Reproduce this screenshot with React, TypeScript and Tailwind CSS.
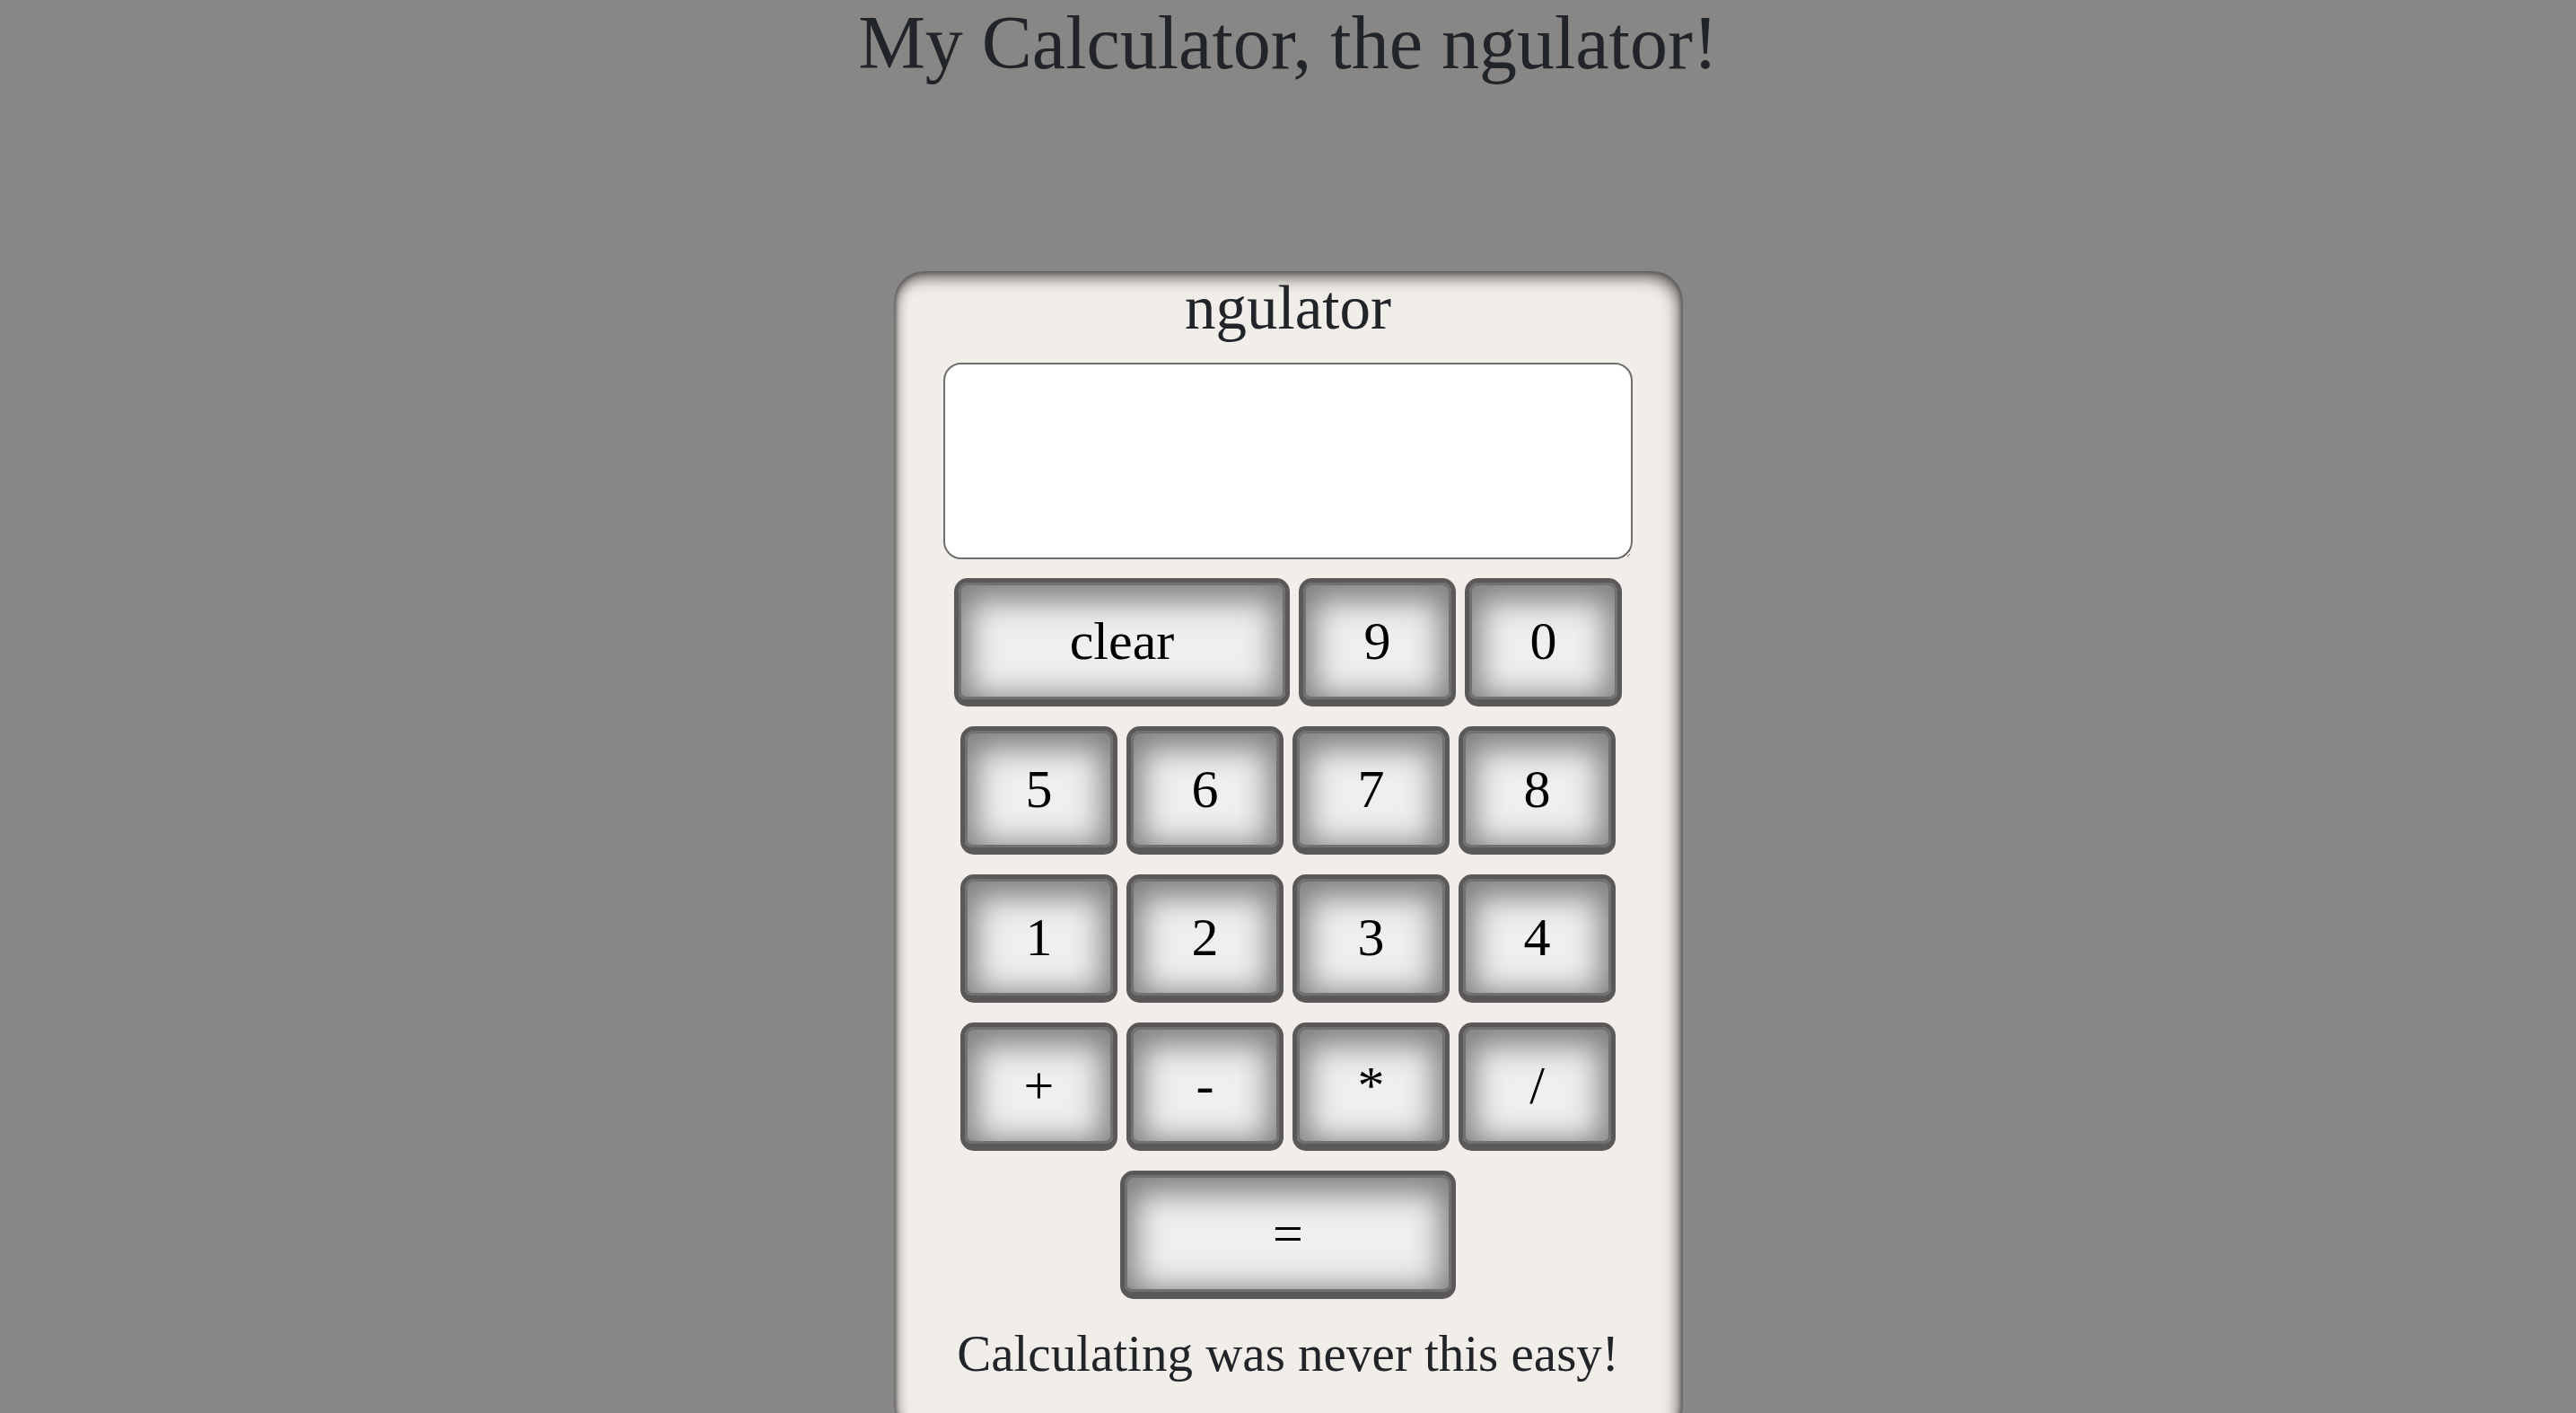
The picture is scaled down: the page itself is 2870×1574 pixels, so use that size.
import { useState } from "react";

const keyBase =
  "flex h-[143px] shrink-0 items-center justify-center rounded-[15px] border-[5px] border-b-[8px] border-[#5a5858] bg-[#efefef] text-[60px] leading-none text-black shadow-[inset_0_0_0_3px_#727070,inset_0_8px_34px_12px_#7f7d7d] cursor-pointer";

const Key = ({
  label,
  wide,
  onClick,
}: {
  label: string;
  wide?: boolean;
  onClick: () => void;
}) => (
  <button
    className={`${keyBase} ${wide ? "w-[374px]" : "w-[175px]"}`}
    onClick={onClick}
  >
    {label}
  </button>
);

export default function App() {
  const [value, setValue] = useState("");

  const press = (k: string) => {
    if (k === "clear") return setValue("");
    if (k === "=") {
      try {
        // eslint-disable-next-line no-new-func
        const res = Function(`"use strict";return (${value})`)();
        setValue(String(res));
      } catch {
        setValue("Error");
      }
      return;
    }
    setValue(value + k);
  };

  const rows = [
    ["5", "6", "7", "8"],
    ["1", "2", "3", "4"],
    ["+", "-", "*", "/"],
  ];

  return (
    <div className="min-h-screen bg-[#888786] font-['Liberation_Serif',serif] text-[#212529]">
      <h1 className="pt-[6px] text-center text-[84px] leading-none font-normal">
        My Calculator, the ngulator!
      </h1>

      <div className="mx-auto mt-[212px] w-[879px] rounded-[34px] bg-[#f1eee9] pt-[7px] pb-[64px] shadow-[inset_0_0_4px_2px_#5e5c5c,inset_-5px_7px_18px_rgba(50,48,48,0.7),inset_4px_0_14px_rgba(60,58,58,0.4)]">
        <h2 className="text-center text-[69px] leading-none font-normal">
          ngulator
        </h2>

        <div className="mt-[26px] flex justify-center">
          <textarea
            value={value}
            onChange={(e) => setValue(e.target.value)}
            className="h-[219px] w-[768px] resize rounded-[20px] border-2 border-[#6f6e6e] bg-white p-3 text-[40px] text-black outline-none"
          />
        </div>

        <div className="mt-[21px] flex flex-col gap-[22px]">
          <div className="flex justify-center gap-[10px]">
            <Key label="clear" wide onClick={() => press("clear")} />
            <Key label="9" onClick={() => press("9")} />
            <Key label="0" onClick={() => press("0")} />
          </div>
          {rows.map((row, i) => (
            <div key={i} className="flex justify-center gap-[10px]">
              {row.map((k) => (
                <Key key={k} label={k} onClick={() => press(k)} />
              ))}
            </div>
          ))}
          <div className="flex justify-center">
            <Key label="=" wide onClick={() => press("=")} />
          </div>
        </div>

        <p className="mt-[32px] text-center text-[57px] leading-none">
          Calculating was never this easy!
        </p>
      </div>
    </div>
  );
}
